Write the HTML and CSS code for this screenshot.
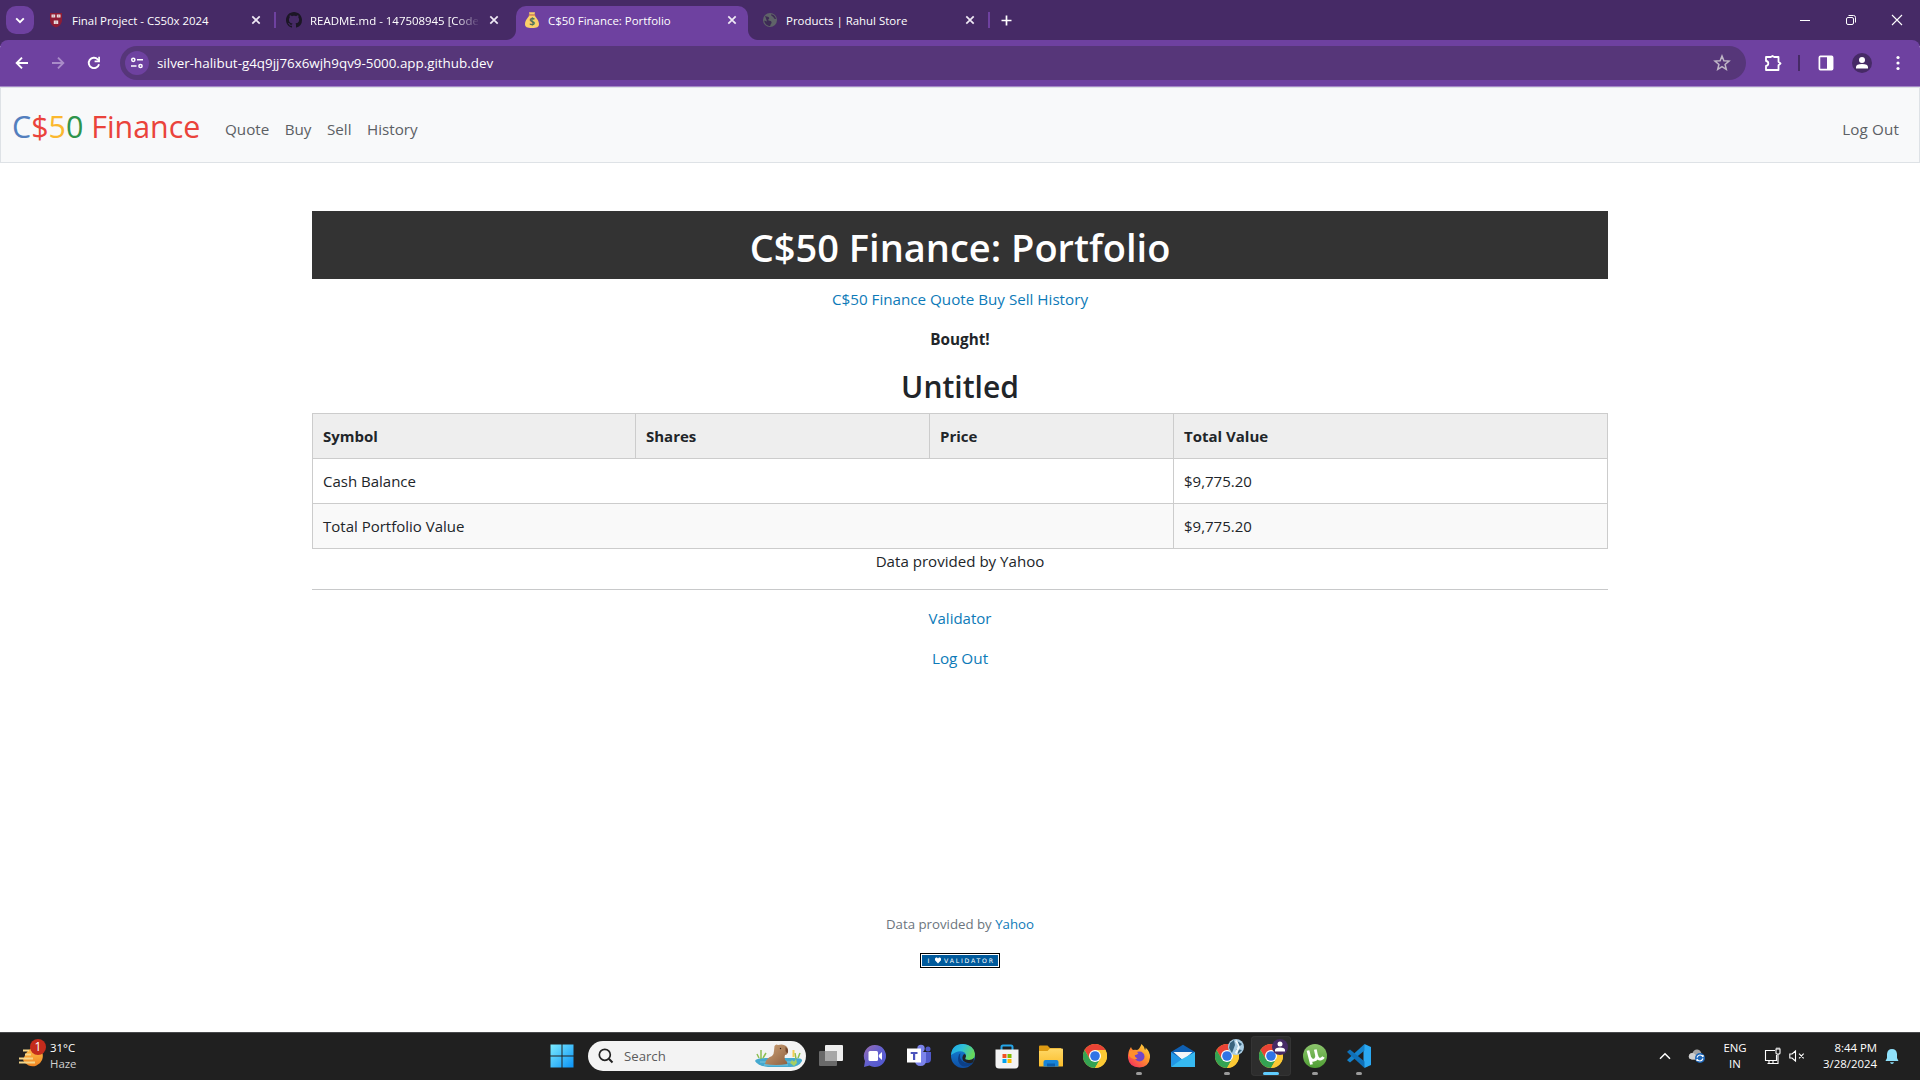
FILE: index.html
```html
<!DOCTYPE html>
<html lang="en">
<head>
<meta charset="utf-8">
<title>C$50 Finance: Portfolio</title>
<link rel="stylesheet" href="styles.css">
</head>
<body>
<svg width="0" height="0" class="defs" aria-hidden="true">
  <defs>
    <linearGradient id="win" x1="0" y1="0" x2="1" y2="1"><stop offset="0" stop-color="#7cebff"/><stop offset="1" stop-color="#0a92f5"/></linearGradient>
    <linearGradient id="edgeA" x1="0" y1="0" x2="1" y2=".4"><stop offset="0" stop-color="#1ba6ea"/><stop offset=".5" stop-color="#2fc0d8"/><stop offset="1" stop-color="#66d85b"/></linearGradient>
    <linearGradient id="edgeB" x1="0" y1="0" x2="0" y2="1"><stop offset="0" stop-color="#1388dc"/><stop offset="1" stop-color="#0f4ea3"/></linearGradient>
    <linearGradient id="chat" x1="0" y1="0" x2="1" y2="1"><stop offset="0" stop-color="#9b6cae"/><stop offset=".5" stop-color="#6260cf"/><stop offset="1" stop-color="#4c55cf"/></linearGradient>
    <linearGradient id="fold" x1="0" y1="0" x2="0" y2="1"><stop offset="0" stop-color="#ffd968"/><stop offset="1" stop-color="#fbbd2b"/></linearGradient>
    <linearGradient id="fox" x1="1" y1="0" x2=".2" y2="1"><stop offset="0" stop-color="#ffe34a"/><stop offset=".45" stop-color="#ff9b28"/><stop offset="1" stop-color="#f5305c"/></linearGradient>
    <linearGradient id="ut" x1="0" y1="0" x2="0" y2="1"><stop offset="0" stop-color="#8cc46c"/><stop offset="1" stop-color="#4f9e34"/></linearGradient>
    <linearGradient id="haze" x1="0" y1="0" x2="0" y2="1"><stop offset="0" stop-color="#ffc04a"/><stop offset="1" stop-color="#f08422"/></linearGradient>
    <linearGradient id="capy" x1="0" y1="0" x2="1" y2="1"><stop offset="0" stop-color="#cfa377"/><stop offset="1" stop-color="#8d6040"/></linearGradient>
    <symbol id="chrome" viewBox="0 0 24 24">
      <circle cx="12" cy="12" r="12" fill="#fcc934"/>
      <path d="M12 6H22.4A12 12 0 0 0 1.6 6L6.8 15Z" fill="#e94335"/>
      <path d="M1.6 6A12 12 0 0 0 12 24L17.2 15L12 12L6.8 15Z" fill="#34a353"/>
      <path d="M22.4 6H12L17.2 15L12 24A12 12 0 0 0 22.4 6Z" fill="#fcc934"/>
      <circle cx="12" cy="12" r="6" fill="#fff"/><circle cx="12" cy="12" r="4.8" fill="#2f74e6"/>
    </symbol>
    <symbol id="x" viewBox="0 0 10 10"><path d="M1.3 1.3L8.7 8.7M8.7 1.3L1.3 8.7" stroke="#efe9f5" stroke-width="1.7" fill="none"/></symbol>
  </defs>
</svg>

<header class="tabstrip">
  <button class="tab-search"><svg width="10" height="7" viewBox="0 0 10 7"><path d="M1.2 1.3L5 5.1L8.800 1.3" fill="none" stroke="#fff" stroke-width="1.9"/></svg></button>
  <div class="tabs">
    <div class="tab">
      <svg class="fav" viewBox="0 0 16 16"><path d="M2 1H14V8C14 12 11 14.500 8 15.500C5 14.500 2 12 2 8Z" fill="#8e1c35"/><path d="M3.500 2.600H7.200V5.500H3.500ZM8.800 2.600H12.500V5.500H8.800ZM5.800 8.500H10.200V12H5.800Z" fill="#e9dfe0"/><path d="M5.300 2.600V5.500M10.700 2.600V5.500M8 8.500V12" stroke="#b9808c" stroke-width=".6"/></svg>
      <span class="tab-title">Final Project - CS50x 2024</span><svg class="tab-x"><use href="#x"/></svg>
    </div>
    <div class="tab sep">
      <svg class="fav" viewBox="0 0 16 16"><path fill="#1b1625" d="M8 0C3.580 0 0 3.580 0 8c0 3.540 2.290 6.530 5.470 7.590.4.070.55-.17.55-.38 0-.19-.01-.82-.01-1.490-2.010.37-2.530-.49-2.690-.94-.09-.23-.48-.94-.82-1.130-.28-.15-.68-.52-.01-.53.63-.01 1.080.58 1.230.82.72 1.210 1.870.87 2.330.66.07-.52.28-.87.51-1.070-1.780-.2-3.640-.89-3.640-3.950 0-.87.31-1.590.82-2.150-.08-.2-.36-1.020.08-2.120 0 0 .67-.21 2.200.82.64-.18 1.320-.27 2-.27s1.360.09 2 .27c1.530-1.040 2.200-.82 2.200-.82.44 1.100.16 1.920.08 2.120.51.56.82 1.270.82 2.150 0 3.070-1.870 3.750-3.650 3.950.29.25.54.73.54 1.480 0 1.070-.01 1.930-.01 2.200 0 .21.15.46.55.38A8.010 8.010 0 0 0 16 8c0-4.420-3.580-8-8-8z"/></svg>
      <span class="tab-title fade">README.md - 147508945 [Code</span><svg class="tab-x"><use href="#x"/></svg>
    </div>
    <div class="tab active">
      <svg class="fav" viewBox="0 0 16 16"><path d="M5.200 3.600H10.800C12 6 15 8.500 15 12C15 15 13 16 8 16S1 15 1 12C1 8.500 4 6 5.200 3.600Z" fill="#fbd069"/><path d="M5 0.300H11L10.500 2.500H5.500Z" fill="#fbd069"/><path d="M4.800 2.500H11.200V3.900H4.800Z" fill="#e89a4c"/><text x="8" y="13.200" text-anchor="middle" class="dollar">$</text></svg>
      <span class="tab-title">C$50 Finance: Portfolio</span><svg class="tab-x"><use href="#x"/></svg>
    </div>
    <div class="tab">
      <svg class="fav" viewBox="0 0 16 16"><circle cx="8" cy="8" r="7" fill="#5f6368"/><path d="M3 3.800C5 5 7 4.500 7.200 6C7.400 7.400 5.500 7.200 6.500 8.500C8 9 9.500 8.800 9.600 10.500C9.500 12 8 12.500 8.300 14C5 14 2.500 11.500 2.200 8.500L5 9.500M9.200 2.200C8.500 3.700 10.500 4 11.500 5.200C12 7 13 7 14 7C13.600 4.500 11.600 2.500 9.200 2.200Z" fill="#3d2a55"/></svg>
      <span class="tab-title">Products | Rahul Store</span><svg class="tab-x"><use href="#x"/></svg>
    </div>
  </div>
  <button class="newtab sep"><svg width="11" height="11" viewBox="0 0 11 11"><path d="M5.500 .5V10.500M.5 5.500H10.500" stroke="#fff" stroke-width="1.700"/></svg></button>
  <div class="winctl">
    <svg viewBox="0 0 46 40"><path d="M18 20.500H28" stroke="#fff"/></svg>
    <svg viewBox="0 0 46 40" fill="none" stroke="#fff"><rect x="18.500" y="17.500" width="7" height="7" rx="1.500"/><path d="M20.500 15.500H25.500Q27.500 15.500 27.500 17.500V22.500"/></svg>
    <svg viewBox="0 0 46 40"><path d="M18 15L28 25M28 15L18 25" stroke="#fff" stroke-width="1.100"/></svg>
  </div>
</header>

<div class="toolbar">
  <svg class="tb" viewBox="0 0 16 16"><path d="M14 8H3M8 2.700L2.700 8L8 13.300" fill="none" stroke="#fff" stroke-width="1.900"/></svg>
  <svg class="tb fwd" viewBox="0 0 16 16"><path d="M2 8H13M8 2.700L13.300 8L8 13.300" fill="none" stroke="#a98cc8" stroke-width="1.900"/></svg>
  <svg class="tb rel" viewBox="0 0 16 16"><path d="M13 9.200A5.200 5.200 0 1 1 11.700 4.300L13 5.600" fill="none" stroke="#fff" stroke-width="1.900"/><path d="M13.100 1.800V6.300H8.600" fill="none" stroke="#fff" stroke-width="1.700"/></svg>
  <div class="omnibox">
    <span class="site"><svg width="14" height="12" viewBox="0 0 14 12" fill="none" stroke="#fff" stroke-width="1.500"><circle cx="3.300" cy="2.800" r="1.600"/><path d="M7 2.800H13M1 9H6.500"/><circle cx="10.500" cy="9" r="1.600"/></svg></span>
    <span class="url">silver-halibut-g4q9jj76x6wjh9qv9-5000.app.github.dev</span>
    <svg class="star" viewBox="0 0 18 18"><path d="M9 2L10.900 6.700L16 7.100L12.100 10.400L13.300 15.300L9 12.700L4.700 15.300L5.900 10.400L2 7.100L7.100 6.700Z" fill="none" stroke="#bfb6c6" stroke-width="1.500"/></svg>
  </div>
  <div class="tools">
    <svg width="18" height="18" viewBox="0 0 18 18"><path d="M2 3H6.800L8.500 2L10.200 3H14.500V7.800L16.500 9.500L14.500 11.200V16H2V12Q4.300 11.700 4.300 9.500T2 7Z" fill="none" stroke="#fff" stroke-width="1.800" stroke-linejoin="round"/></svg>
    <i class="divider"></i>
    <svg width="16" height="16" viewBox="0 0 16 16"><rect x="1.400" y="1.400" width="13.200" height="13.200" rx="1" fill="none" stroke="#fff" stroke-width="1.700"/><path d="M9 1H15V15H9Z" fill="#fff"/></svg>
    <svg class="avatar" width="20" height="20" viewBox="0 0 20 20"><circle cx="10" cy="10" r="10" fill="#462a66"/><circle cx="10" cy="7" r="3" fill="#fff"/><path d="M4 15.500V14Q4 11 10 11T16 14V15.500Z" fill="#fff"/></svg>
    <svg class="menu" width="4" height="16" viewBox="0 0 4 16" fill="#fff"><circle cx="2" cy="2.500" r="1.600"/><circle cx="2" cy="8" r="1.600"/><circle cx="2" cy="13.500" r="1.600"/></svg>
  </div>
</div>

<div class="page">
  <nav class="navbar">
    <a class="brand"><span class="blue">C</span><span class="red">$</span><span class="yellow">5</span><span class="green">0</span> <span class="red">Finance</span></a>
    <a class="nl">Quote</a><a class="nl">Buy</a><a class="nl">Sell</a><a class="nl">History</a>
    <a class="nl logout">Log Out</a>
  </nav>
  <main class="container">
    <h1>C$50 Finance: Portfolio</h1>
    <p class="links">C$50 Finance Quote Buy Sell History</p>
    <p class="flash">Bought!</p>
    <h2>Untitled</h2>
    <table>
      <colgroup><col class="c1"><col class="c2"><col class="c3"><col class="c4"></colgroup>
      <thead><tr><th>Symbol</th><th>Shares</th><th>Price</th><th>Total Value</th></tr></thead>
      <tbody>
        <tr><td colspan="3">Cash Balance</td><td>$9,775.20</td></tr>
        <tr><td colspan="3">Total Portfolio Value</td><td>$9,775.20</td></tr>
      </tbody>
    </table>
    <p class="data">Data provided by Yahoo</p>
    <hr>
    <p class="link">Validator</p>
    <p class="link wide">Log Out</p>
  </main>
  <footer>
    <p>Data provided by <a>Yahoo</a></p>
    <svg class="badge" width="80" height="15" viewBox="0 0 80 15"><rect width="80" height="15" fill="#000"/><rect x="1" y="1" width="78" height="13" fill="#fff"/><rect x="2" y="2" width="76" height="11" fill="#005a9c"/><text x="7.500" y="10" class="bt">I</text><path d="M18 10.500L15 7.300V5.500L16 4.500H17L18 5.500L19 4.500H20L21 5.500V7.300Z" fill="#fff"/><text x="24" y="10" class="bt" textLength="49">VALIDATOR</text></svg>
  </footer>
</div>

<div class="taskbar">
  <div class="weather">
    <svg width="28" height="30" viewBox="0 0 28 30"><path d="M5 21A10 10 0 0 0 24 13L18 8Q9 8 5 21Z" fill="url(#haze)"/><path d="M5 11.500H11M7 15.500H13M1 19.500H15M1 23.500H17" stroke="#f4d58a" stroke-width="1.800"/><circle cx="20" cy="8" r="8" fill="#c42b1c"/><text x="20" y="12.300" text-anchor="middle" class="wn">1</text></svg>
    <div class="wt"><b>31°C</b><span>Haze</span></div>
  </div>
  <div class="apps">
    <span class="app"><svg width="24" height="24" viewBox="0 0 24 24"><path d="M.5 .5H11.500V11.500H.5ZM12.500 .5H23.500V11.500H12.500ZM.5 12.500H11.500V23.500H.5ZM12.500 12.500H23.500V23.500H12.500Z" fill="url(#win)"/></svg></span>
    <div class="search">
      <svg width="16" height="16" viewBox="0 0 16 16"><circle cx="6.800" cy="6.800" r="5.500" fill="none" stroke="#222" stroke-width="1.700"/><path d="M10.800 10.800L14.500 14.500" stroke="#222" stroke-width="2"/></svg>
      <span>Search</span>
      <svg class="art" width="50" height="26" viewBox="0 0 50 26"><path d="M1 18Q2 15 12 15H40Q49 15 48 18Q45 24 36 24H14Q4 23 1 18Z" fill="#45a9cf"/><path d="M6 19H42M10 22H34" stroke="#8fd0e3" stroke-width=".8"/><path d="M5 15L3 11M7 16V7M9 15L12 10M42 16L41 10M44 15L46 10" stroke="#8cbf52" stroke-width="1.500"/><path d="M39.500 14V7" stroke="#f2cf55" stroke-width="2"/><path d="M11 21Q12 15 18 13Q20 11 20 8L20.500 3Q22 .5 24 2Q29 .5 32 3Q34.500 5 34 9Q33.500 12 31 12Q30 14 31 17Q34 19 33 21Q22 23 11 21Z" fill="url(#capy)"/><path d="M31.500 4Q35 6 33.700 10Q32 10 31.500 8Z" fill="#74482f"/><circle cx="26.500" cy="5.500" r=".7" fill="#2b1b12"/><path d="M36 20L38 17L40 19L42 16L43 20L40 23Z" fill="#a6cf62"/></svg>
    </div>
    <span class="app"><svg width="24" height="24" viewBox="0 0 24 24"><rect x="6" y="1" width="18" height="16" rx="1" fill="#eee"/><rect x="0" y="7" width="18" height="15" rx="1" fill="#777" fill-opacity=".85"/><path d="M6 7H18V17H6Z" fill="#a7a7a7"/></svg></span>
    <span class="app"><svg width="24" height="24" viewBox="0 0 24 24"><path d="M12 1A11 11 0 1 1 6.500 21.500L1 23L2 17A11 11 0 0 1 12 1Z" fill="url(#chat)"/><rect x="5.500" y="7" width="9.500" height="10" rx="1.500" fill="#fff"/><path d="M15.800 11L19 8V16L15.800 13Z" fill="#fff"/></svg></span>
    <span class="app"><svg width="24" height="24" viewBox="0 0 24 24"><circle cx="14" cy="4.500" r="3.700" fill="#7b83eb"/><circle cx="21" cy="5" r="2.500" fill="#5059c9"/><path d="M16 8H24V15Q24 19 20 19H16Z" fill="#5059c9"/><path d="M8 8H19V16Q19 22 13.500 22Q8 22 8 16Z" fill="#7b83eb"/><rect x="0" y="4.500" width="14" height="14" fill="#fff"/><path d="M3.700 8H10.500V10H8.200V16H6V10H3.700Z" fill="#4b53bc"/></svg></span>
    <span class="app"><svg width="24" height="24" viewBox="0 0 24 24"><circle cx="12" cy="12" r="12" fill="url(#edgeB)"/><path d="M0 11Q1 0 12 0Q23 1 24 10Q24 16 18 16Q13 16 14.500 13.500Q16 11 13.500 8.500Q8 5 0 11Z" fill="url(#edgeA)"/><path d="M8 10.500Q5 18 11 22Q18 24 22.500 18Q16 21 11 17Q8 14 9.500 9.300Z" fill="#0d3f86"/><path d="M14.500 13.500Q13 16 18 16Q21 16 23 14L22.500 18.300Q16 20.500 12.500 17Q10 13.500 13 10Q16 11 14.500 13.500Z" fill="#222"/></svg></span>
    <span class="app"><svg width="24" height="25" viewBox="0 0 24 25"><path d="M6.500 6V3Q6.500 1.500 8 1.500H16Q17.500 1.500 17.500 3V6" fill="none" stroke="#25a5e8" stroke-width="2"/><path d="M.5 5.500H23.500V21Q23.500 24.500 20 24.500H4Q.5 24.500 .5 21Z" fill="#f3f3f3"/><path d="M7.500 10H11.500V14H7.500Z" fill="#f25022"/><path d="M12.500 10H16.500V14H12.500Z" fill="#7fba00"/><path d="M7.500 15H11.500V19H7.500Z" fill="#00a4ef"/><path d="M12.500 15H16.500V19H12.500Z" fill="#ffb900"/></svg></span>
    <span class="app"><svg width="24" height="24" viewBox="0 0 24 24"><path d="M0 2.500Q0 1.500 1 1.500H8.500L11 4H22V9H0Z" fill="#dd9a12"/><path d="M0 7H8.500L11 4.500H23Q24 4.500 24 5.500V22Q24 22.500 23 22.500H1Q0 22.500 0 22Z" fill="url(#fold)"/><path d="M4.500 22.500V18Q4.500 16 6.500 16H17.500Q19.500 16 19.500 18V22.500Z" fill="#1784d8"/><path d="M8 19.500H16V22.500H8Z" fill="#0c5eac"/></svg></span>
    <span class="app"><svg width="24" height="24"><use href="#chrome"/></svg></span>
    <span class="app run"><svg width="24" height="24" viewBox="0 0 24 24"><path d="M14.500 0Q17 2 18 6Q19 5 18.500 3.500Q23.500 8 23 13.500Q22 23 12.500 23.500Q2 23 1 14Q.5 8 4 3Q4.500 5 6 6Q8 5.500 10 6Q12.500 5.500 14.500 0Z" fill="url(#fox)"/><circle cx="12.500" cy="12.500" r="5" fill="#7246c8"/><path d="M2 7Q7 6 11.500 9Q10 11.500 7.500 11Q8 14 10.500 14.500Q6 17 2 12Z" fill="#ff8f2c"/></svg></span>
    <span class="app"><svg width="24" height="24" viewBox="0 0 24 24"><path d="M0 8L12 .8L24 8V14H0Z" fill="#0e5fb2"/><path d="M2.500 8H21.500L12 16.500Z" fill="#f4f6f8"/><path d="M0 8L12 16L0 23Z" fill="#2196e6"/><path d="M24 8V23H0Q1 22 12 14.500Z" fill="#36b9f1"/></svg></span>
    <span class="app run"><svg width="24" height="24"><use href="#chrome"/></svg><svg class="over" width="16" height="16" viewBox="0 0 16 16"><circle cx="8" cy="8" r="8" fill="#a9cde4"/><path d="M2 4L6 1L7 6L4 14L1 9ZM9 2L14 5L11 8ZM8 10L14 11L10 15Z" fill="#39647e"/><path d="M7 2L10 7L7 14L9 15L12 8L9 1Z" fill="#edf7fb"/></svg></span>
    <span class="app run current"><svg width="24" height="24"><use href="#chrome"/></svg><svg class="over" width="16" height="16" viewBox="0 0 16 16"><circle cx="8" cy="8" r="8" fill="#462a66"/><circle cx="8" cy="5" r="2.500" fill="#fff"/><path d="M3 12.500V11Q3 8.500 8 8.500T13 11V12.500Z" fill="#fff"/></svg></span>
    <span class="app run"><svg width="24" height="24" viewBox="0 0 24 24"><circle cx="12" cy="12" r="12" fill="url(#ut)"/><path d="M5 6.500L8.500 20.500M7 13.500Q8.500 17 11.500 16Q14.500 15 13.500 11L12.300 5.500M13.600 11Q14.800 16 18 15Q19.800 14.300 20.500 13" fill="none" stroke="#fff" stroke-width="2.800"/></svg></span>
    <span class="app run"><svg width="24" height="24" viewBox="0 0 24 24"><path d="M17.500 0L24 3V21L17.500 24L16.500 21V3Z" fill="#2aa8f2"/><path d="M17.500 0V6.500L3 18.500L.3 16.500V15.700Z" fill="#1582cb"/><path d="M17.500 24V17.500L3 5.500L.3 7.500V8.300Z" fill="#0f70b8"/></svg></span>
  </div>
  <div class="tray">
    <svg class="chev" width="12" height="8" viewBox="0 0 12 8"><path d="M1 6.800L6 1.800L11 6.800" fill="none" stroke="#fff" stroke-width="1.500"/></svg>
    <svg class="cloud" width="18" height="16" viewBox="0 0 18 16"><path d="M4 11.500Q.5 11 .8 8Q1.500 5 4.500 5Q6 1 9.500 1.500Q13 2 13.500 6L11 11.500Z" fill="#a5a5a5"/><path d="M4 11.500Q.5 11 .8 8Q1.500 5 4.500 5Q7 5 9 9V11.500Z" fill="#d0d0d0"/><circle cx="12" cy="10" r="5" fill="#1d66b8"/><path d="M9 9.500Q10 7 12 7Q14 7 15 9V7M15 10.500Q14 13 12 13Q10 13 9 11V13" fill="none" stroke="#fff" stroke-width="1.200"/></svg>
    <div class="lang"><span>ENG</span><span>IN</span></div>
    <svg class="net" width="18" height="18" viewBox="0 0 18 18" fill="none" stroke="#fff" stroke-width="1.100"><path d="M11 3.500H1.500V13.500H12.500V8M5 13.500V16.500M9 13.500V16.500M3.500 16.500H11.500M12 2H16V6Q16 7 15 7H13Q12 7 12 6ZM14 7V16.500H11.500M13 2V.5M15 2V.5"/></svg>
    <svg class="vol" width="16" height="14" viewBox="0 0 16 14" fill="none" stroke="#fff" stroke-width="1.100"><path d="M.8 5V9H3L6.500 12V2L3 5ZM10 4.700L14.700 9.400M14.700 4.700L10 9.400"/></svg>
    <div class="clock"><span>8:44 PM</span><span>3/28/2024</span></div>
    <svg class="bell" width="14" height="17" viewBox="0 0 14 17"><path d="M7 1Q11.500 1 12 6V10L13.500 13H.5L2 10V6Q2.500 1 7 1ZM5 14.200H9Q8.500 16 7 16T5 14.200Z" fill="#8fe1fb"/></svg>
  </div>
</div>
</body>
</html>
```
FILE: styles.css
```css
* { box-sizing: border-box; }
html, body { margin: 0; height: 100%; }
body {
  width: 1920px; height: 1080px; overflow: hidden;
  display: flex; flex-direction: column;
  font-family: "Open Sans", "Noto Sans", sans-serif;
  font-size: 15px; line-height: 24px; color: #212529; background: #fff;
}
.defs { position: absolute; }
button { border: 0; padding: 0; background: none; }
svg { flex: none; display: block; }
p, h1, h2 { margin: 0; }

.tabstrip { height: 40px; background: #462a66; display: flex; align-items: stretch; flex: none; }
.tab-search { width: 28px; height: 28px; margin: 6px 6px 0 6px; border-radius: 10px; background: #6e41a0; display: flex; align-items: center; justify-content: center; }
.tabs { display: flex; }
.tab { position: relative; width: 232px; height: 34px; margin: 6px 6px 0 0; padding: 0 0 6px 8px; display: flex; align-items: center; }
.fav { width: 16px; height: 16px; margin-right: 8px; }
.tab-title { width: 168px; line-height: 18px; padding-top: 1px; font-size: 11.450px; color: #fff; white-space: nowrap; }
.fade { -webkit-mask-image: linear-gradient(90deg, #000 146px, transparent 170px); mask-image: linear-gradient(90deg, #000 146px, transparent 170px); }
.tab-x { width: 10px; height: 10px; margin-left: 11px; }
.active { background: #6e41a0; border-radius: 10px 10px 0 0; }
.active::before, .active::after { content: ""; position: absolute; bottom: 0; width: 10px; height: 10px; }
.active::before { left: -10px; background: radial-gradient(circle at 0 0, #462a66 9.5px, #6e41a0 10.5px); }
.active::after { right: -10px; background: radial-gradient(circle at 100% 0, #462a66 9.5px, #6e41a0 10.5px); }
.sep::after { content: ""; position: absolute; left: -4px; top: 6px; width: 2px; height: 16px; background: #6e41a0; }
.newtab { position: relative; width: 28px; height: 28px; margin-top: 6px; display: flex; align-items: center; justify-content: center; }
.winctl { margin-left: auto; display: flex; }
.winctl svg { width: 46px; height: 40px; }

.toolbar { height: 47px; flex: none; padding-bottom: 1px; background: linear-gradient(#462a66, #462a66) top/100% 6px no-repeat; display: flex; align-items: center; position: relative; z-index: 0; }
.toolbar::before { content: ""; position: absolute; inset: 0; z-index: -1; background: #6e41a0; border-radius: 8px 8px 0 0; border-bottom: 1px solid #a488c6; }
.tb { width: 16px; height: 16px; margin-left: 14px; }
.fwd { margin-left: 20px; }
.rel { margin-left: 20px; }
.omnibox { margin-left: 18px; width: 1626px; height: 34px; border-radius: 17px; background: #563679; display: flex; align-items: center; padding: 0 15px 0 5px; }
.site { width: 24px; height: 24px; border-radius: 50%; background: #6e41a0; display: flex; align-items: center; justify-content: center; }
.url { margin-left: 8px; color: #fff; font-size: 13.380px; line-height: 20px; flex: 1; }
.star { width: 18px; height: 18px; }
.tools { display: flex; align-items: center; margin-left: 18px; }
.divider { width: 2px; height: 16px; background: #462a66; margin: 0 18px 0 16px; }
.avatar { margin-left: 18px; }
.menu { margin-left: 24px; }

.page { flex: 1; display: flex; flex-direction: column; min-height: 0; }
.navbar { height: 76px; flex: none; border: 1px solid #dee2e6; background: #f8f9fa; display: flex; align-items: flex-start; padding: 16px 20px 0 11px; color: #5c6064; white-space: nowrap; }
.brand { font-size: 30.400px; line-height: 45px; width: 213px; }
.blue { color: #537fbe; } .red { color: #ea433b; } .yellow { color: #fbb82e; } .green { color: #2e944b; }
.nl { margin: 13px 15.500px 0 0; font-size: 15.200px; }
.logout { margin-left: auto; margin-right: 0; letter-spacing: .15px; }

.container { width: 1296px; margin: 48px auto 0; text-align: center; }
h1 { height: 68px; background: #333; color: #fff; font-size: 38px; font-weight: 600; line-height: 48px; padding: 12px 10px 8px; }
.links, .link { color: #0d7ab8; }
.links { margin-top: 8px; font-size: 15.200px; }
.flash { font-weight: 700; margin: 16px 0; font-size: 15.300px; }
h2 { font-size: 30px; font-weight: 600; line-height: 38px; padding-top: 1px; margin-bottom: 7px; }
table { width: 1296px; border-collapse: collapse; table-layout: fixed; text-align: left; }
.c1 { width: 323px; } .c2 { width: 294px; } .c3 { width: 244px; }
th, td { height: 45px; border: 1px solid #ccc; padding: 0 10px; line-height: 24px; }
th { background: #eee; font-weight: 700; }
tbody tr:nth-child(2) { background: #f9f9f9; }
.data { font-size: 15.100px; }
hr { border: 0; border-top: 1px solid #c8c9ca; margin: 16px 0; }
.link { margin-bottom: 16px; }
.wide { font-size: 15.300px; }
footer { margin: auto auto 64px; display: flex; flex-direction: column; align-items: center; font-size: 13.250px; line-height: 21px; color: #6c757d; }
footer a { color: #0d7ab8; }
.badge { margin-top: 18px; }
.bt { font: 6.200px "DejaVu Sans", sans-serif; fill: #fff; }
.dollar { font: bold 10px "Open Sans", sans-serif; fill: #53705a; }

.taskbar { height: 48px; flex: none; background: #202020; border-top: 1px solid #48494b; display: grid; grid-template-columns: 540px 1fr 280px; color: #fff; font-size: 11.400px; line-height: 16px; }
.weather { display: flex; padding: 6px 0 0 18px; }
.wn { font: 12px "Open Sans", sans-serif; fill: #fff; }
.wt { display: flex; flex-direction: column; margin: 1px 0 0 4px; color: #d0d0d0; }
.wt b { font-weight: 400; color: #fff; }
.apps { display: flex; align-items: center; padding-bottom: 1px; }
.app { position: relative; width: 40px; height: 40px; margin: 0 2px; display: flex; align-items: center; justify-content: center; border-radius: 4px; }
.search { width: 218px; height: 30px; border-radius: 15px; background: #f3f3f3; display: flex; align-items: center; padding-left: 10px; margin: 0 3px 0 4px; color: #5b5b5b; font-size: 13.200px; }
.search span { margin-left: 10px; flex: 1; }
.art { margin-right: 2px; }
.run::after { content: ""; position: absolute; bottom: 1px; left: 17px; width: 6px; height: 3px; border-radius: 2px; background: #9a9a9a; }
.current { background: #2d2d2d; box-shadow: inset 0 0 0 1px #343434; }
.current::after { left: 12px; width: 16px; background: #60cdff; }
.over { position: absolute; left: 21px; top: 3px; }
.tray { display: flex; align-items: center; white-space: nowrap; padding-bottom: 1px; }
.chev { margin-left: 19px; }
.cloud { margin-left: 17px; }
.lang, .clock { display: flex; flex-direction: column; align-items: center; }
.lang { margin-left: 17px; width: 24px; }
.net { margin-left: 17px; }
.vol { margin-left: 7px; }
.clock { align-items: flex-end; margin-left: 15px; width: 57px; }
.bell { margin-left: 8px; }
```
